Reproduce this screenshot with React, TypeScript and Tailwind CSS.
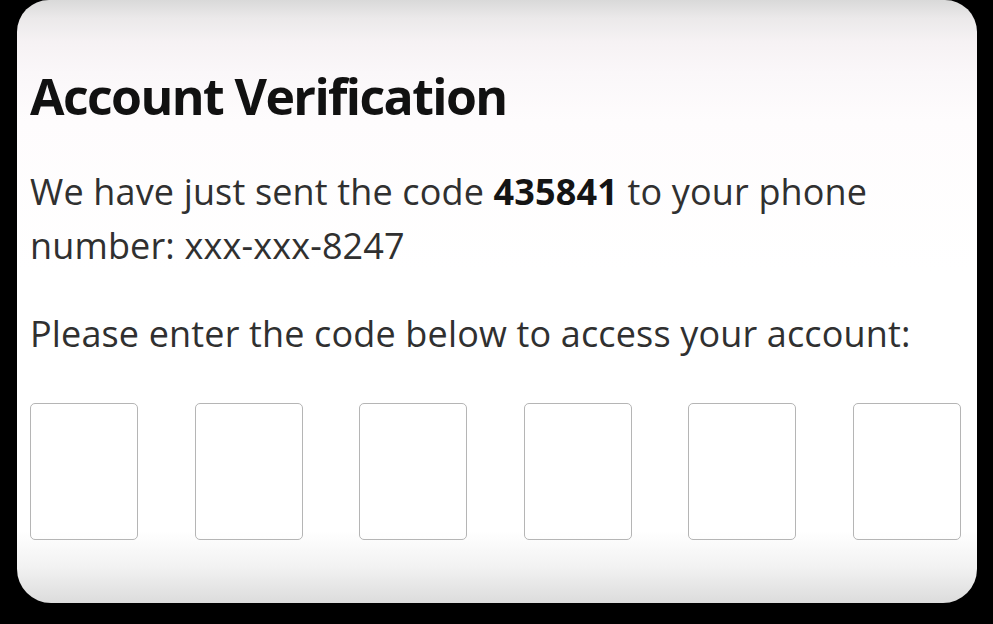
export default function App() {
  const boxes = [0, 1, 2, 3, 4, 5];

  return (
    <div className="w-[993px] h-[624px] bg-black overflow-hidden">
      <div className="ml-[17px] w-[960px] h-[603px] rounded-t-[32px] rounded-b-[34px] bg-[linear-gradient(to_bottom,#d9d9d9_0%,#ebe9ea_3%,#f6f2f4_7%,#faf7f9_12%,#fefcfd_20%,#ffffff_45%,#ffffff_88%,#f2f2f2_94%,#dcdcdc_100%)] pl-[13px] pr-[16px] pt-[66px] font-['Open_Sans',sans-serif]">
        <h1 className="text-[50px] leading-[60px] font-bold text-[#111111] tracking-[-1.6px]">
          Account Verification
        </h1>

        <p className="mt-[39px] text-[36px] leading-[54px] text-[#303030] tracking-[0.15px]">
          We have just sent the code <span className="font-bold text-[#141414]">435841</span> to your phone
          <br />
          number: xxx-xxx-8247
        </p>

        <p className="mt-[34px] text-[36px] leading-[54px] text-[#303030] tracking-[0.15px]">
          Please enter the code below to access your account:
        </p>

        <div className="mt-[42px] w-[931px] flex justify-between">
          {boxes.map((b) => (
            <div
              key={b}
              className="w-[108px] h-[137px] rounded-[5px] border-[1.5px] border-[#b5b5b5] bg-white/40"
            />
          ))}
        </div>
      </div>
    </div>
  );
}
